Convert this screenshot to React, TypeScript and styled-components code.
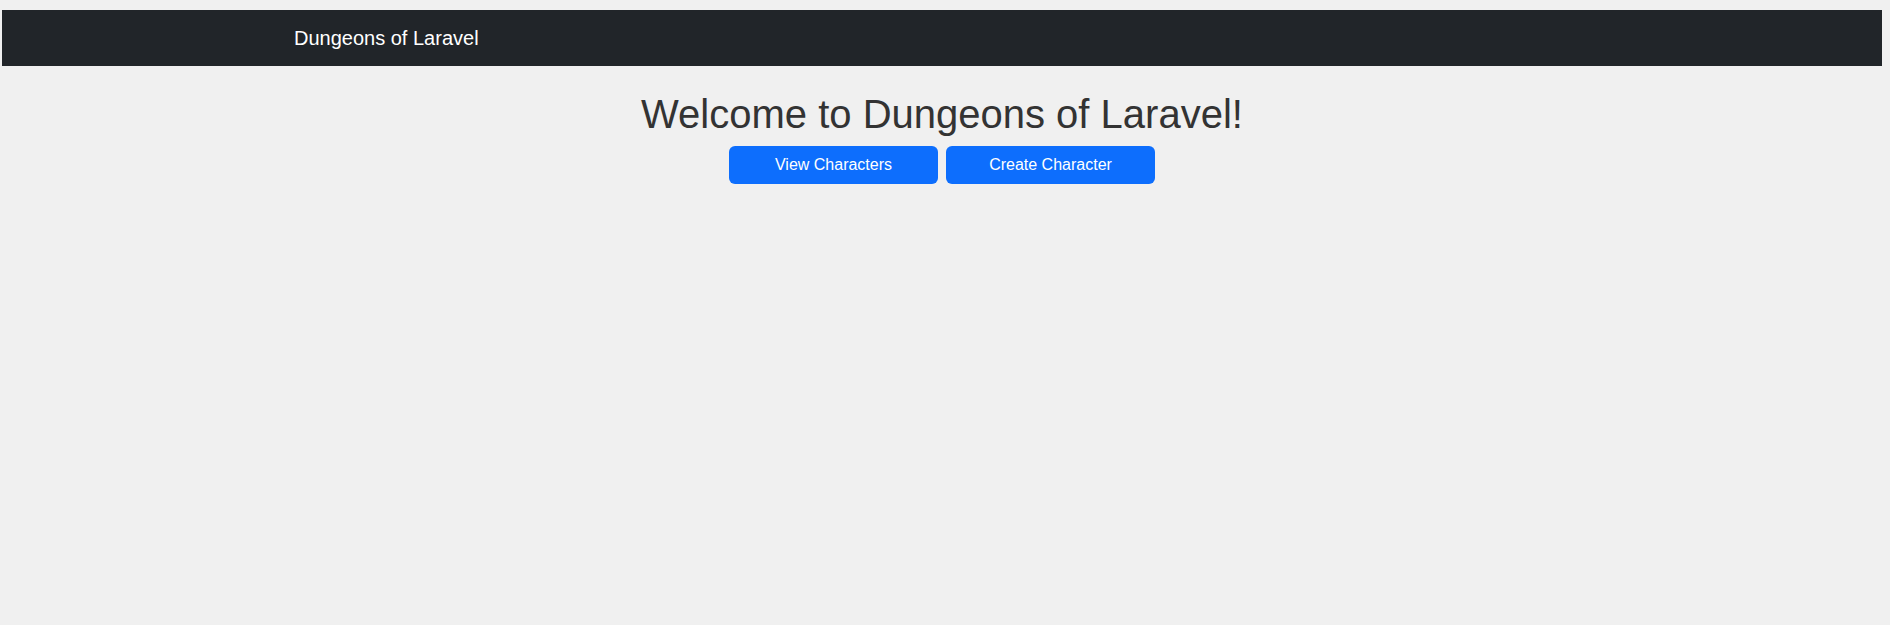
import React from "react";
import styled, { createGlobalStyle } from "styled-components";

const GlobalStyle = createGlobalStyle`
  html, body {
    margin: 0;
    padding: 0;
    background: #f0f0f0;
  }
  body {
    padding: 10px 8px 0 2px;
    font-family: "Liberation Sans", Arial, sans-serif;
    color: #333333;
  }
  * { box-sizing: border-box; }
`;

const Navbar = styled.nav`
  background: #212529;
  padding: 8px 0;
  height: 56px;
`;

const NavContainer = styled.div`
  max-width: 1320px;
  margin: 0 auto;
  padding: 0 12px;
  display: flex;
  align-items: center;
`;

const Brand = styled.a`
  color: #ffffff;
  font-size: 20px;
  line-height: 30px;
  padding: 5px 0;
  text-decoration: none;
`;

const Main = styled.main`
  display: flex;
  flex-direction: column;
  align-items: center;
  padding-top: 24px;
`;

const Title = styled.h1`
  margin: 0 0 8px;
  font-size: 40px;
  line-height: 48px;
  font-weight: 400;
  color: #333333;
`;

const Actions = styled.div`
  display: flex;
  gap: 8px;
`;

const Button = styled.a`
  display: flex;
  align-items: center;
  justify-content: center;
  width: 209px;
  height: 38px;
  background: #0d6efd;
  color: #ffffff;
  border-radius: 6px;
  font-size: 16px;
  line-height: 24px;
  text-decoration: none;
`;

export default function App() {
  return (
    <>
      <GlobalStyle />
      <Navbar>
        <NavContainer>
          <Brand href="#">Dungeons of Laravel</Brand>
        </NavContainer>
      </Navbar>
      <Main>
        <Title>Welcome to Dungeons of Laravel!</Title>
        <Actions>
          <Button href="#">View Characters</Button>
          <Button href="#">Create Character</Button>
        </Actions>
      </Main>
    </>
  );
}
